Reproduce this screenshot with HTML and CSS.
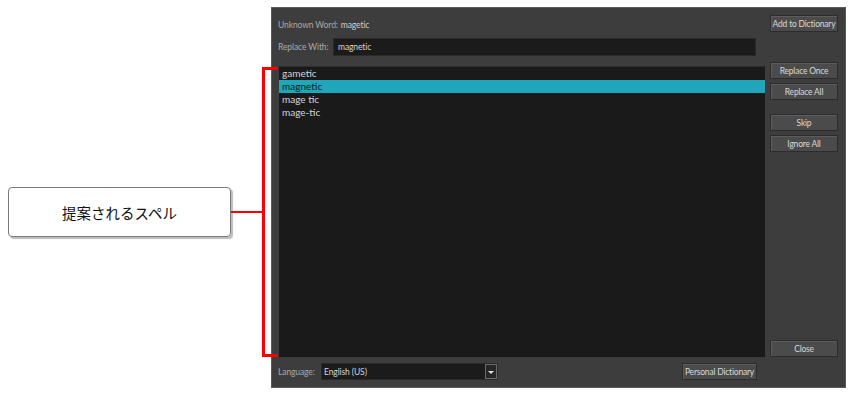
FILE: index.html
```html
<!DOCTYPE html>
<html>
<head>
    <title>Spelling</title>
    <link rel="stylesheet" href="styles.css">
</head>
<body>
    <div class="page">
        <div class="annot">
            <div class="callout">提案されるスペル</div>
            <div class="connector"></div>
            <div class="bracket"></div>
        </div>

        <div class="dialog">
            <div class="word-row">
                <span class="label">Unknown Word:</span>
                <span class="value">magetic</span>
            </div>
            <button class="button">Add to Dictionary</button>

            <div class="replace-row">
                <span class="label replace-label">Replace With:</span>
                <div class="field">magnetic</div>
            </div>
            <div></div>

            <div class="suggestions">
                <div class="item">gametic</div>
                <div class="item selected">magnetic</div>
                <div class="item">mage tic</div>
                <div class="item">mage-tic</div>
            </div>
            <div class="actions">
                <button class="button">Replace Once</button>
                <button class="button">Replace All</button>
                <button class="button skip">Skip</button>
                <button class="button">Ignore All</button>
                <button class="button close">Close</button>
            </div>

            <div class="bottom-row">
                <div class="lang">
                    <span class="label">Language:</span>
                    <div class="combo">
                        <span class="combo-text">English (US)</span>
                        <span class="combo-arrow"></span>
                    </div>
                </div>
                <button class="button personal">Personal Dictionary</button>
            </div>
            <div></div>
        </div>
    </div>
</body>
</html>
```

FILE: styles.css
```css
body {
    margin: 0;
    background: #fff;
    font-family: Lato, "Noto Sans", sans-serif;
}
.page {
    display: flex;
    align-items: flex-start;
    padding-top: 7px;
}
.annot {
    display: flex;
    align-items: flex-start;
    padding-top: 60px;
}
.callout {
    margin-left: 8px;
    margin-top: 120px;
    width: 223px;
    height: 50px;
    box-sizing: border-box;
    border: 1.5px solid #7a7a7a;
    border-radius: 4px;
    box-shadow: 2px 2px 1px #bdbdbd;
    display: flex;
    align-items: center;
    justify-content: center;
    font-family: "Noto Sans CJK JP", sans-serif;
    font-size: 14.5px;
    color: #111;
}
.connector {
    margin-top: 144px;
    width: 31px;
    height: 2px;
    background: #f00;
}
.bracket {
    position: relative;
    z-index: 1;
    width: 16px;
    height: 290px;
    box-sizing: border-box;
    border: 3px solid #f00;
    border-right: none;
    margin-right: -7px;
}
.dialog {
    width: 575px;
    height: 381px;
    box-sizing: border-box;
    border: 1px solid #5a5a5a;
    background: #3d3d3d;
    padding: 7px;
    display: grid;
    grid-template-columns: 1fr 68px;
    grid-template-rows: 17px 18px 1fr 17px;
    column-gap: 5px;
    row-gap: 6px;
    font-size: 8.5px;
    letter-spacing: -0.1px;
}
.label {
    color: #a9a9a9;
    white-space: nowrap;
}
.value {
    color: #cfcfcf;
    margin-left: 3px;
}
.word-row {
    display: flex;
    align-items: center;
    margin-left: -1px;
    padding-top: 3px;
}
.replace-row {
    display: flex;
    align-items: center;
    padding-right: 9px;
}
.replace-label {
    width: 55px;
    margin-left: -1px;
}
.field {
    flex: 1;
    height: 18px;
    box-sizing: border-box;
    background: #1b1b1b;
    border: 1px solid #2a2a2a;
    color: #d6d6d6;
    padding-left: 4px;
    display: flex;
    align-items: center;
}
.button {
    height: 17px;
    padding: 0;
    box-sizing: border-box;
    background: #4b4b4b;
    border: 1px solid #2c2c2c;
    box-shadow: inset 1px 1px 0 #5d5d5d;
    color: #d8d8d8;
    font-family: Lato, "Noto Sans", sans-serif;
    font-size: 8.5px;
    letter-spacing: -0.2px;
    white-space: nowrap;
}
.suggestions {
    margin-top: 4px;
    background: #1a1a1a;
    border-top: 1px solid #2a2a2a;
}
.item {
    height: 13px;
    line-height: 13px;
    padding-left: 3px;
    font-size: 10px;
    letter-spacing: 0;
    color: #d4d4d4;
}
.item.selected {
    background: #20a6ba;
    color: #0b1d20;
}
.actions {
    display: flex;
    flex-direction: column;
    gap: 4px;
}
.actions .skip {
    margin-top: 10px;
}
.actions .close {
    margin-top: auto;
}
.bottom-row {
    display: flex;
    align-items: center;
    justify-content: space-between;
    padding-right: 8px;
}
.lang {
    display: flex;
    align-items: center;
}
.lang .label {
    width: 43px;
    margin-left: -1px;
}
.combo {
    width: 177px;
    height: 17px;
    box-sizing: border-box;
    background: #1b1b1b;
    border: 1px solid #2a2a2a;
    display: flex;
    align-items: stretch;
}
.combo-text {
    flex: 1;
    color: #d6d6d6;
    padding-left: 2px;
    display: flex;
    align-items: center;
}
.combo-arrow {
    width: 10px;
    border: 1px solid #6a6a6a;
    background: #262626;
    position: relative;
}
.combo-arrow::after {
    content: "";
    position: absolute;
    left: 2px;
    top: 6px;
    border-left: 3px solid transparent;
    border-right: 3px solid transparent;
    border-top: 3px solid #e0e0e0;
}
.personal {
    width: 75px;
}
```
